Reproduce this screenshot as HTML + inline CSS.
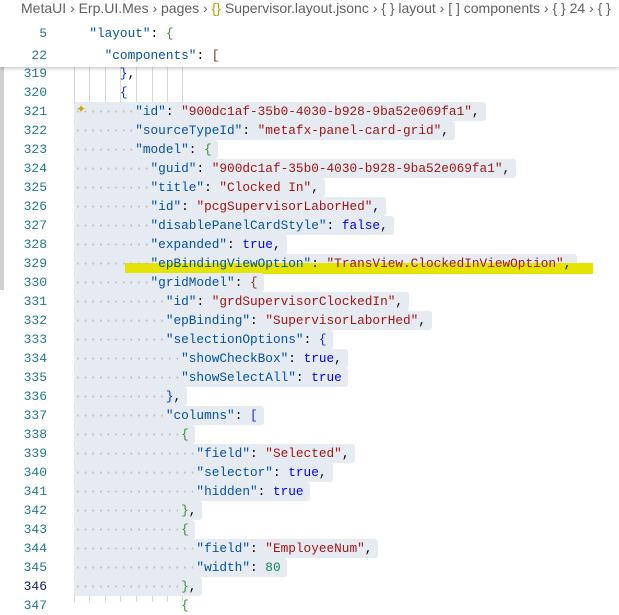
<!DOCTYPE html><html><head><style>
body{margin:0;width:619px;height:602px;overflow:hidden;background:#fff;position:relative;font-family:"Liberation Mono",monospace;font-size:12.75px}
.bc{position:absolute;top:0;left:0;width:640px;height:20px;font-family:"Liberation Sans",sans-serif;font-size:14px;color:#616161;line-height:16px;white-space:nowrap;padding-left:21px;box-sizing:border-box}
.bc b{font-weight:normal;color:#b8a000}
.ln{position:absolute;left:0;width:47px;text-align:right;color:#237893;height:19px;line-height:19px;font-size:13px}
.c{position:absolute;left:74px;height:19px;line-height:19px;white-space:pre}
.sel{background:#e5ebf1;border-radius:3px}
.k{color:#0451a5}.s{color:#a31515}.t{color:#0000ff}.n{color:#098658}.p{color:#000}
.d{color:#b9bcc2}
.b1{color:#0431fa}.b2{color:#319331}.b3{color:#7b3814}
.g{position:absolute;width:1px;background:#d9d9d9}
</style></head><body>
<div class="bc">MetaUI › Erp.UI.Mes › pages › <b>{}</b> Supervisor.layout.jsonc › { } layout › [ ] components › { } 24 › { }</div>
<div style="position:absolute;left:0;top:20px;width:4px;height:270px;background:#d0d0d0"></div>
<div id="g"></div>
<div style="position:absolute;left:125px;top:263px;width:468px;height:11px;background:#e4e400"></div>
<div id="code"></div>
<div style="position:absolute;left:0;top:20px;width:619px;height:47px;background:#fff;box-shadow:0 2px 3px rgba(0,0,0,.18);z-index:5">
<div class="ln" style="top:4px">5</div><div class="c" style="top:4px">  <span class="k">"layout"</span>: <span class="b2">{</span></div>
<div class="ln" style="top:26px">22</div><div class="c" style="top:26px">    <span class="k">"components"</span>: <span class="b3">[</span></div>
</div>
<div style="position:absolute;left:76px;top:102px;color:#d4a800;font-size:12px;z-index:6">✦</div>
<script>
(function(){
var L=[
[319,6,'<span class="b1">}</span>,',0],
[320,6,'<span class="b1">{</span>',0],
[321,8,'<span class="k">"id"</span>: <span class="s">"900dc1af-35b0-4030-b928-9ba52e069fa1"</span>,',1],
[322,8,'<span class="k">"sourceTypeId"</span>: <span class="s">"metafx-panel-card-grid"</span>,',1],
[323,8,'<span class="k">"model"</span>: <span class="b2">{</span>',1],
[324,10,'<span class="k">"guid"</span>: <span class="s">"900dc1af-35b0-4030-b928-9ba52e069fa1"</span>,',1],
[325,10,'<span class="k">"title"</span>: <span class="s">"Clocked In"</span>,',1],
[326,10,'<span class="k">"id"</span>: <span class="s">"pcgSupervisorLaborHed"</span>,',1],
[327,10,'<span class="k">"disablePanelCardStyle"</span>: <span class="t">false</span>,',1],
[328,10,'<span class="k">"expanded"</span>: <span class="t">true</span>,',1],
[329,10,'<span class="k">"epBindingViewOption"</span>: <span class="s">"TransView.ClockedInViewOption"</span>,',2],
[330,10,'<span class="k">"gridModel"</span>: <span class="b3">{</span>',1],
[331,12,'<span class="k">"id"</span>: <span class="s">"grdSupervisorClockedIn"</span>,',1],
[332,12,'<span class="k">"epBinding"</span>: <span class="s">"SupervisorLaborHed"</span>,',1],
[333,12,'<span class="k">"selectionOptions"</span>: <span class="b1">{</span>',1],
[334,14,'<span class="k">"showCheckBox"</span>: <span class="t">true</span>,',1],
[335,14,'<span class="k">"showSelectAll"</span>: <span class="t">true</span>',1],
[336,12,'<span class="b1">}</span>,',1],
[337,12,'<span class="k">"columns"</span>: <span class="b1">[</span>',1],
[338,14,'<span class="b2">{</span>',1],
[339,16,'<span class="k">"field"</span>: <span class="s">"Selected"</span>,',1],
[340,16,'<span class="k">"selector"</span>: <span class="t">true</span>,',1],
[341,16,'<span class="k">"hidden"</span>: <span class="t">true</span>',1],
[342,14,'<span class="b2">}</span>,',1],
[343,14,'<span class="b2">{</span>',1],
[344,16,'<span class="k">"field"</span>: <span class="s">"EmployeeNum"</span>,',1],
[345,16,'<span class="k">"width"</span>: <span class="n">80</span>',1],
[346,14,'<span class="b2">}</span>,',1],
[347,14,'<span class="b2">{</span>',0]];
var h='';
for(var i=0;i<L.length;i++){var a=L[i],ty=64+(a[0]-319)*19;
var ind=a[3]?'<span class="d">'+'·'.repeat(a[1])+'</span>':' '.repeat(a[1]);
var st=a[3]==2?'background:linear-gradient(#e5ebf1,#e5ebf1) 0 0/100% 9px no-repeat,linear-gradient(#e5ebf1,#e5ebf1) 0 9px/51px 10px no-repeat;':'';
h+='<div class="ln" style="top:'+ty+'px'+(a[0]==346?';color:#0b216f':'')+'">'+a[0]+'</div>';
h+='<div class="c" style="top:'+ty+'px;z-index:1"><span class="'+(a[3]?'sel':'')+'" style="display:inline-block;padding-right:6px;'+st+'">'+ind+a[2]+'</span></div>';}
document.getElementById('code').innerHTML=h;
var gx=[74,89,105,120,136,152,167,182],g='';
for(var j=0;j<gx.length;j++)g+='<div class="g" style="left:'+gx[j]+'px;top:60px;height:542px"></div>';
document.getElementById('g').innerHTML=g;
})();
</script>
</body></html>
